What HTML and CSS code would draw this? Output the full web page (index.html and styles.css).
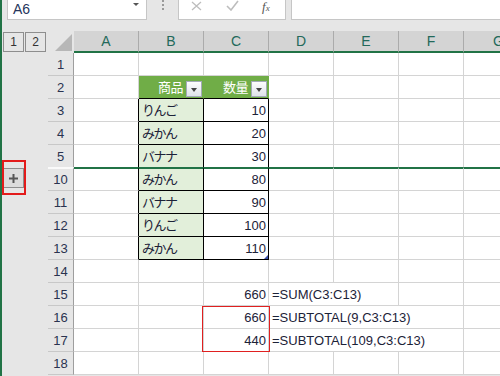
FILE: index.html
```html
<!DOCTYPE html>
<html lang="ja">
<head>
    <meta charset="UTF-8">
    <title>SUBTOTAL</title>
    <link rel="stylesheet" href="styles.css">
</head>
<body>

<div class="toolbar">
    <div class="namebox">A6<span class="drop"></span></div>
    <div class="grip"></div>
    <div class="fbuttons">
        <svg class="cancel" width="11" height="10" viewBox="0 0 11 10"><path d="M1 1L10 9M10 1L1 9" stroke="#bdbdbd" stroke-width="1.3" fill="none"/></svg>
        <svg class="enter" width="13" height="11" viewBox="0 0 13 11"><path d="M1 6L5 10L12 1" stroke="#bdbdbd" stroke-width="1.6" fill="none"/></svg>
        <span class="fx">f<sub>x</sub></span>
    </div>
    <div class="formula"></div>
</div>

<div class="sheet">
    <div class="row head">
        <div class="ol levels"><span class="lvl">1</span><span class="lvl">2</span></div>
        <div class="corner"><svg width="17" height="17" viewBox="0 0 17 17"><polygon points="0,17 17,17 17,0" fill="#b7b7b7"/></svg></div>
        <div class="colh">A</div><div class="colh">B</div><div class="colh">C</div><div class="colh">D</div><div class="colh">E</div><div class="colh">F</div><div class="colh cut">G</div>
    </div>

    <div class="row">
        <div class="ol"></div><div class="rh">1</div>
        <div class="c"></div><div class="c"></div><div class="c"></div><div class="c"></div><div class="c"></div><div class="c"></div><div class="c"></div>
    </div>
    <div class="row">
        <div class="ol"></div><div class="rh">2</div>
        <div class="c"></div>
        <div class="c th"><span class="lbl">商品</span><span class="filter"><i></i></span></div>
        <div class="c th"><span class="lbl">数量</span><span class="filter"><i></i></span></div>
        <div class="c"></div><div class="c"></div><div class="c"></div><div class="c"></div>
    </div>
    <div class="row">
        <div class="ol"></div><div class="rh">3</div>
        <div class="c edge"></div><div class="c item">りんご</div><div class="c qty">10</div>
        <div class="c"></div><div class="c"></div><div class="c"></div><div class="c"></div>
    </div>
    <div class="row">
        <div class="ol"></div><div class="rh">4</div>
        <div class="c edge"></div><div class="c item">みかん</div><div class="c qty">20</div>
        <div class="c"></div><div class="c"></div><div class="c"></div><div class="c"></div>
    </div>
    <div class="row r5">
        <div class="ol"></div><div class="rh">5</div>
        <div class="c edge"></div><div class="c item">バナナ</div><div class="c qty">30</div>
        <div class="c"></div><div class="c"></div><div class="c"></div><div class="c"></div>
    </div>
    <!-- rows 6-9 are grouped and hidden -->
    <div class="row r10">
        <div class="ol">
            <span class="expand"><svg width="9" height="9" viewBox="0 0 9 9"><path d="M4.5 0V9M0 4.5H9" stroke="#555" stroke-width="2"/></svg></span>
            <span class="frame"></span>
        </div>
        <div class="rh">10</div>
        <div class="c edge"></div><div class="c item">みかん</div><div class="c qty">80</div>
        <div class="c"></div><div class="c"></div><div class="c"></div><div class="c"></div>
    </div>
    <div class="row">
        <div class="ol"></div><div class="rh">11</div>
        <div class="c edge"></div><div class="c item">バナナ</div><div class="c qty">90</div>
        <div class="c"></div><div class="c"></div><div class="c"></div><div class="c"></div>
    </div>
    <div class="row">
        <div class="ol"></div><div class="rh">12</div>
        <div class="c edge"></div><div class="c item">りんご</div><div class="c qty">100</div>
        <div class="c"></div><div class="c"></div><div class="c"></div><div class="c"></div>
    </div>
    <div class="row">
        <div class="ol"></div><div class="rh">13</div>
        <div class="c edge"></div><div class="c item">みかん</div><div class="c qty handle">110</div>
        <div class="c"></div><div class="c"></div><div class="c"></div><div class="c"></div>
    </div>
    <div class="row">
        <div class="ol"></div><div class="rh">14</div>
        <div class="c"></div><div class="c"></div><div class="c"></div><div class="c"></div><div class="c"></div><div class="c"></div><div class="c"></div>
    </div>
    <div class="row">
        <div class="ol"></div><div class="rh">15</div>
        <div class="c"></div><div class="c"></div><div class="c num">660</div>
        <div class="c span2">=SUM(C3:C13)</div><div class="c"></div><div class="c"></div>
    </div>
    <div class="row">
        <div class="ol"></div><div class="rh">16</div>
        <div class="c"></div><div class="c"></div><div class="c num mark">660<span class="redbox"></span></div>
        <div class="c span3">=SUBTOTAL(9,C3:C13)</div><div class="c"></div>
    </div>
    <div class="row">
        <div class="ol"></div><div class="rh">17</div>
        <div class="c"></div><div class="c"></div><div class="c num">440</div>
        <div class="c span3">=SUBTOTAL(109,C3:C13)</div><div class="c"></div>
    </div>
    <div class="row">
        <div class="ol"></div><div class="rh">18</div>
        <div class="c"></div><div class="c"></div><div class="c"></div><div class="c"></div><div class="c"></div><div class="c"></div><div class="c"></div>
    </div>
</div>

</body>
</html>
```

FILE: styles.css
```css
* {
    box-sizing: border-box;
}
html, body {
    margin: 0;
}
body {
    width: 500px;
    height: 376px;
    overflow: hidden;
    background: #e6e6e6;
    border-left: 2px solid #217346;
    font-family: "Liberation Sans", "Noto Sans CJK JP", sans-serif;
    font-size: 13px;
    color: #1c2238;
}

/* formula bar */
.toolbar {
    display: flex;
    height: 20px;
    margin-bottom: 11px;
}
.namebox {
    display: flex;
    align-items: center;
    justify-content: space-between;
    width: 140px;
    margin-left: 5px;
    padding: 0 7px 1px 5px;
    background: #fff;
    border: 1px solid #c6c6c6;
    border-top: none;
    font-size: 14px;
    color: #26355c;
}
.drop {
    align-self: flex-start;
    margin-top: 3px;
    border-left: 3px solid transparent;
    border-right: 3px solid transparent;
    border-top: 3px solid #555;
}
.grip {
    width: 2px;
    height: 10px;
    margin: 0 14px 0 15px;
    background: repeating-linear-gradient(#9a9a9a 0 2px, transparent 2px 4px);
}
.fbuttons {
    display: flex;
    align-items: flex-start;
    width: 108px;
    padding-left: 12px;
    background: #fff;
    border: 1px solid #c6c6c6;
    border-top: none;
}
.cancel {
    margin-top: 1px;
}
.enter {
    margin: 0 0 0 24px;
}
.fx {
    margin: 1px 0 0 23px;
    font-family: "Liberation Serif", serif;
    font-style: italic;
    font-size: 13px;
    line-height: 11px;
    color: #555;
}
.fx sub {
    font-size: 9px;
    vertical-align: 0;
}
.formula {
    flex: 1;
    margin-left: 5px;
    background: #fff;
    border-left: 1px solid #c6c6c6;
    border-bottom: 1px solid #c6c6c6;
}

/* grid */
.row {
    display: grid;
    grid-template-columns: 46px 26px repeat(6, 65px) 1fr;
    height: 23px;
}
.head {
    height: 22px;
}
.r5 {
    height: 22px;
}
.r10 {
    height: 24px;
}
.ol {
    position: relative;
}
.levels {
    display: flex;
    gap: 1px;
    padding: 1px 0 0 1px;
}
.lvl, .expand {
    display: flex;
    align-items: center;
    justify-content: center;
    width: 21px;
    height: 20px;
    border: 1px solid #8e8e8e;
    font-size: 12px;
    color: #333;
}
.expand {
    margin: 1px 0 0 1px;
    background: #dcdcdc;
}
.frame {
    position: absolute;
    left: 0;
    top: -7px;
    width: 24px;
    height: 35px;
    border: 2px solid #e31b1b;
}
.corner {
    display: flex;
    align-items: flex-end;
    justify-content: flex-end;
    padding: 0 2px 2px 0;
}
.colh {
    display: flex;
    align-items: center;
    justify-content: center;
    padding-bottom: 1px;
    background: #d4d4d4;
    border-right: 1px solid #ababab;
    border-bottom: 2px solid #217346;
    font-size: 14px;
    color: #23695a;
}
/* column G is cut by the window edge */
.colh.cut {
    justify-content: flex-start;
    padding-left: 29px;
    border-right: none;
}
.rh {
    display: flex;
    align-items: flex-end;
    justify-content: center;
    padding-bottom: 3px;
    line-height: 15px;
    border-right: 1px solid #9e9e9e;
    border-bottom: 1px solid #c8c8c8;
    color: #2a3350;
}
.c {
    display: flex;
    align-items: flex-end;
    padding: 0 2px 3px 3px;
    line-height: 15px;
    white-space: nowrap;
    background: #fff;
    border-right: 1px solid #d4d4d4;
    border-bottom: 1px solid #d4d4d4;
}
.c:last-child {
    border-right: none;
}
.num, .qty {
    justify-content: flex-end;
}
.edge {
    border-right-color: #000;
}
.item, .qty {
    border-right-color: #000;
    border-bottom-color: #000;
}
.item {
    background: #e2efda;
    letter-spacing: -1.5px;
}
.th {
    justify-content: flex-end;
    gap: 3px;
    padding: 0 1px 1px 0;
    background: #70ad47;
    color: #fff;
    border-right-color: #70ad47;
    border-bottom-color: #000;
}
.lbl {
    margin-bottom: 2px;
    letter-spacing: -0.5px;
}
.filter {
    display: flex;
    align-items: center;
    justify-content: center;
    width: 16px;
    height: 16px;
    padding-top: 2px;
    border: 1px solid #a3aab8;
    background: linear-gradient(#fdfdfd, #dfe3ea);
}
.filter i {
    border-left: 3px solid transparent;
    border-right: 3px solid transparent;
    border-top: 4px solid #444;
}
.span2 {
    grid-column: span 2;
}
.span3 {
    grid-column: span 3;
}
.r5 .c, .r5 .rh {
    border-bottom: none;
}
.r10 .c {
    border-top: 2px solid #217346;
}
.r10 .rh {
    border-top: 2px solid #fafafa;
}
.handle, .mark {
    position: relative;
}
.handle::after {
    content: "";
    position: absolute;
    right: 0;
    bottom: 0;
    border-left: 4px solid transparent;
    border-bottom: 4px solid #3a4fa8;
}
.redbox {
    position: absolute;
    left: -2px;
    top: 0;
    width: 68px;
    height: 46px;
    border: 1px solid #e02020;
}
```
